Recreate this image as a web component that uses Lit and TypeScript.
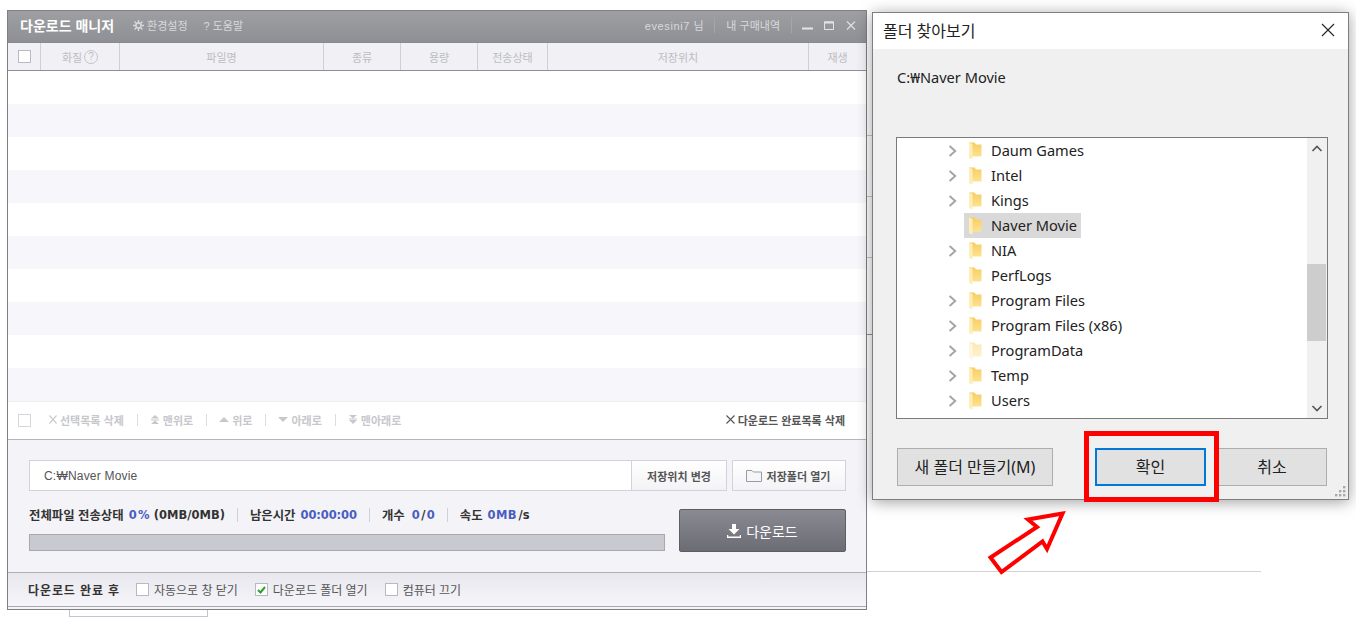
import { LitElement, html, css } from "lit";
import { customElement } from "lit/decorators.js";

const columns = [
  { label: "", w: 33 },
  { label: "화질", w: 79, help: true },
  { label: "파일명", w: 204 },
  { label: "종류", w: 77 },
  { label: "용량", w: 77 },
  { label: "전송상태", w: 70 },
  { label: "저장위치", w: 261 },
  { label: "재생", w: 57 },
];

const folders = [
  { name: "Daum Games", arrow: true },
  { name: "Intel", arrow: true },
  { name: "Kings", arrow: true },
  { name: "Naver Movie", arrow: false, selected: true },
  { name: "NIA", arrow: true },
  { name: "PerfLogs", arrow: false },
  { name: "Program Files", arrow: true },
  { name: "Program Files (x86)", arrow: true },
  { name: "ProgramData", arrow: true, pale: true },
  { name: "Temp", arrow: true },
  { name: "Users", arrow: true },
];

const folderIcon = (pale = false) => html`<svg class="folder ${pale ? "pale" : ""}" width="13" height="18" viewBox="0 0 13 18">
  <defs><linearGradient id="fg" x1="0" y1="0" x2="0" y2="1"><stop offset="0" stop-color="#f7cd5f"/><stop offset="1" stop-color="#fde291"/></linearGradient></defs>
  <path d="M0 .5H5.5L7 2.5H12.5V14.5H0Z" fill="url(#fg)"/>
  <path d="M0 .5L3.5 2V17.5L0 16Z" fill="#fdeeb8"/>
</svg>`;

const chevron = html`<svg class="chev" width="10" height="12" viewBox="0 0 10 12"><path d="M1.6 1L7.2 6L1.6 11" fill="none" stroke="#a6a6a6" stroke-width="2"/></svg>`;

const cross = (color: string, size: number) => html`<svg width=${size} height="9" viewBox="0 0 9 9" preserveAspectRatio="none"><path d="M.5 .5L8.5 8.5M8.5 .5L.5 8.5" stroke=${color} stroke-width="1.1"/></svg>`;
const toolIcon = (d: string) => html`<svg width="10" height="9" viewBox="0 0 10 9"><path d=${d} fill="#c7c7cc"/></svg>`;
const ICON_TOP = "M5 0L9 3.5H1ZM1 4.5H9V5.5H1ZM5 5.5L9 9H1Z";
const ICON_UP = "M5 2L10 7H0Z";
const ICON_DOWN = "M0 2H10L5 7Z";
const ICON_BOTTOM = "M1 0H9L5 3.5ZM1 3.5H9V4.5H1ZM1 5H9L5 9Z";

const scrapLines = [
  { y: 135, c: "#c6c6c6" },
  { y: 196, c: "#c6c6c6" },
  { y: 257, c: "#c6c6c6" },
  { y: 334, c: "#8f8f8f" },
];

@customElement("app-root")
export class AppRoot extends LitElement {
  static styles = css`
    :host { display: block; position: relative; width: 1356px; height: 617px; overflow: hidden; background: #fff; font-family: "Liberation Sans", "Noto Sans CJK KR", sans-serif; }
    .rule { position: absolute; left: 867px; top: 571px; width: 394px; height: 1px; background: #d2d2d2; }
    .scrap { position: absolute; left: 867px; width: 6px; height: 1px; }
    .stub { position: absolute; left: 69px; top: 610px; width: 139px; height: 7px; border: 1px solid #c4c4c8; border-top: 0; box-sizing: border-box; }

    .win { position: absolute; left: 7px; top: 10px; width: 860px; height: 600px; box-sizing: border-box; border: 1px solid #7f7f84; display: flex; flex-direction: column; background: #f3f3f8; }
    .title { height: 31px; flex: none; box-sizing: border-box; background: linear-gradient(#9e9fa3, #8f9095); display: flex; align-items: center; padding: 0 10px 3px 12px; color: #d9d9dc; font-size: 11px; }
    .title b { color: #fff; font-size: 14px; font-weight: 700; margin-right: 19px; }
    .title .menu { margin-right: 16px; display: flex; align-items: center; gap: 3px; }
    .title .spacer { flex: 1; }
    .title .user { letter-spacing: .6px; margin-right: -1px; }
    .title i { width: 1px; height: 16px; background: #a5a6aa; margin: 0 11px; }
    .title i.last { margin-right: 10px; }
    .title .ctl { margin-left: 11px; display: block; }
    .title .ctl.first { margin-left: 0; }
    .title .ctl.mid { margin-right: 1px; }

    .head { display: flex; height: 29px; flex: none; box-sizing: border-box; background: #f0f0f5; border-bottom: 1px solid #8f8fa0; border-top: 1px solid #8a8a90; color: #bcbcc2; font-size: 11px; }
    .head > div { display: flex; align-items: center; justify-content: center; box-sizing: border-box; border-right: 1px solid #cfcfd6; gap: 2px; }
    .head > div:last-child { border-right: 0; }
    .help { width: 14px; height: 14px; border-radius: 50%; border: 1px solid #c4c4ca; box-sizing: border-box; font-size: 10px; display: flex; align-items: center; justify-content: center; }

    .cb { width: 13px; height: 13px; box-sizing: border-box; border: 1px solid #b9b9c2; background: #fff; display: flex; align-items: center; justify-content: center; flex: none; }
    .cb.faint { border-color: #d5d5da; }

    .rows { flex: none; height: 330px; display: flex; flex-direction: column; }
    .rows div { height: 33px; flex: none; background: #fff; }
    .rows div:nth-child(even) { background: #f7f7fb; }

    .tools { height: 39px; flex: none; box-sizing: border-box; background: #fff; border-top: 1px solid #eeeef3; border-bottom: 1px solid #b4b4bd; display: flex; align-items: center; padding: 0 21px 2px 10px; font-size: 11px; color: #c7c7cc; font-weight: 700; }
    .tools .cb { margin: 2px 18px 0 0; }
    .tools span { display: flex; align-items: center; gap: 3px; white-space: nowrap; }
    .tools i { width: 1px; height: 12px; background: #dcdce0; margin: 0 12px 0 13px; }
    .tools .right { margin-left: auto; color: #555; }

    .panel { flex: none; height: 133px; box-sizing: border-box; padding: 20px 20px 0 21px; border-bottom: 1px solid #b0b0b6; }
    .pathrow { display: flex; height: 31px; font-size: 11px; }
    .path { flex: 1; box-sizing: border-box; background: #fff; border: 1px solid #d2d2d9; padding-left: 14px; display: flex; align-items: center; color: #555; font-size: 12px; letter-spacing: .2px; }
    .btn { box-sizing: border-box; border: 1px solid #d2d2d9; background: linear-gradient(#fff, #f3f3f6); display: flex; align-items: center; justify-content: center; gap: 5px; font-size: 11px; font-weight: 700; color: #555; }
    .btn.change { width: 96px; margin-left: -1px; }
    .btn.open { width: 114px; margin-left: 5px; padding-right: 2px; }
    .lower { display: flex; margin-top: 18px; gap: 14px; }
    .left { width: 636px; }
    .status { display: flex; align-items: center; height: 14px; margin-top: -1px; font-size: 12.4px; font-weight: 700; color: #333; white-space: nowrap; }
    .status em { font-style: normal; color: #4a5dc0; font-family: "DejaVu Sans", sans-serif; font-size: 11.5px; margin-left: 5px; letter-spacing: -.1px; }
    .status em.pct { letter-spacing: 1.3px; }
    .status em.cnt { margin-left: 7px; }
    .status em.cnt2 { margin-left: 0; }
    .status em.spd { letter-spacing: .4px; }
    .status .k { font-family: "DejaVu Sans", sans-serif; font-size: 11.5px; margin-left: 3px; }
    .status .s { font-family: "DejaVu Sans", sans-serif; font-size: 11.5px; margin: 0 1.5px; }
    .status i { width: 1px; height: 14px; background: #d0d0d6; margin: 0 12px; }
    .bar { margin-top: 12px; height: 17px; box-sizing: border-box; background: #c9c9d2; border: 1px solid #a8a8ae; }
    .dl { width: 167px; height: 43px; box-sizing: border-box; border: 1px solid #5d5d64; border-radius: 2px; background: linear-gradient(#8a8a93, #6c6c75); color: #fff; font-size: 14px; display: flex; align-items: center; justify-content: center; gap: 5px; }

    .foot { flex: none; height: 34px; box-sizing: border-box; background: linear-gradient(#e7e7ed, #f5f5fa); border-bottom: 1px solid #a8a8ae; display: flex; align-items: center; padding-left: 20px; font-size: 12px; color: #555; letter-spacing: -.02px; }
    .foot b { color: #333; margin-right: 16px; letter-spacing: .9px; white-space: nowrap; }
    .foot .cb { margin-right: 5px; }
    .foot span { margin-right: 17px; white-space: nowrap; }

    .dlg { position: absolute; left: 872px; top: 12px; width: 477px; height: 488px; box-sizing: border-box; border: 1px solid #7e7e7e; background: #f0f0f0; box-shadow: 0 2px 14px rgba(0,0,0,.38); display: flex; flex-direction: column; font-family: "Noto Sans", "Noto Sans CJK KR", sans-serif; color: #222; }
    .dtitle { height: 36px; flex: none; box-sizing: border-box; background: #fff; display: flex; align-items: center; justify-content: space-between; padding: 0 13px 2px 10px; font-size: 16px; }
    .dpath { height: 88px; flex: none; box-sizing: border-box; padding: 18px 0 0 24px; font-size: 14.6px; }
    .tree { margin-left: 23px; width: 432px; height: 282px; flex: none; box-sizing: border-box; border: 1px solid #7a7a7a; background: #fff; display: flex; position: relative; overflow: hidden; }
    .list { flex: 1; padding: 0 0 0 51px; font-size: 14.6px; }
    .node { display: flex; align-items: center; height: 25px; }
    .node .chev { margin-right: 6px; flex: none; }
    .node .gap { width: 16px; flex: none; }
    .label { display: flex; align-items: center; height: 25px; padding: 0 4px 0 5px; }
    .nm { margin-bottom: 2px; }
    .selected { background: #d9d9d9; }
    .folder { margin-right: 9px; flex: none; }
    .pale { opacity: .45; }
    .scroll { width: 20px; flex: none; background: #f0f0f0; position: relative; }
    .thumb { position: absolute; left: 0; right: 1px; top: 126px; height: 77px; background: #cdcdcd; }
    .arrowb { position: absolute; left: 4px; }
    .arrowb.up { top: 6px; }
    .arrowb.down { bottom: 5px; }
    .dbtns { display: flex; margin: 29px 0 0 24px; height: 38px; font-size: 16px; }
    .dbtn { box-sizing: border-box; border: 1px solid #adadad; background: #e1e1e1; display: flex; align-items: center; justify-content: center; padding-bottom: 3px; }
    .dbtn.mk { width: 156px; }
    .dbtn.ok { width: 111px; margin-left: 42px; border: 2px solid #0078d7; }
    .dbtn.no { width: 110px; margin-left: 11px; }
    .grip { position: absolute; right: 2px; bottom: 2px; }

    .redbox { position: absolute; left: 1084px; top: 431px; width: 135px; height: 71px; box-sizing: border-box; border: 5px solid #f00; }
    .arrow { position: absolute; left: 980px; top: 505px; }
  `;

  render() {
    return html`
      <div class="rule"></div>
      ${scrapLines.map((l) => html`<div class="scrap" style="top:${l.y}px;background:${l.c}"></div>`)}
      <div class="stub"></div>
      <section class="win">
        <div class="title">
          <b>다운로드 매니저</b>
          <span class="menu">
            <svg width="11" height="11" viewBox="0 0 11 11"><circle cx="5.5" cy="5.5" r="2.6" fill="none" stroke="#d9d9dc" stroke-width="1.6"/><path d="M5.5 0V2M5.5 9V11M0 5.5H2M9 5.5H11M1.6 1.6L3 3M8 8L9.4 9.4M1.6 9.4L3 8M8 3L9.4 1.6" stroke="#d9d9dc" stroke-width="1.4"/></svg>
            환경설정
          </span>
          <span class="menu">? 도움말</span>
          <span class="spacer"></span>
          <span class="user">evesini7 님</span>
          <i></i>
          <span>내 구매내역</span>
          <i class="last"></i>
          <svg class="ctl first" width="11" height="11" viewBox="0 0 11 11"><path d="M0 8.5H11" stroke="#e4e4e6" stroke-width="2"/></svg>
          <svg class="ctl mid" width="10" height="11" viewBox="0 0 10 11"><path d="M.5 2H9.5V9.5H.5Z" fill="none" stroke="#e4e4e6"/><path d="M0 2.5H10" stroke="#e4e4e6" stroke-width="2"/></svg>
          <svg class="ctl" width="10" height="11" viewBox="0 0 10 11"><path d="M1 1.5L9 9.5M9 1.5L1 9.5" stroke="#dfdfe2" stroke-width="1.3"/></svg>
        </div>
        <div class="head">
          ${columns.map(
            (c, i) => html`<div style="width:${c.w}px">
              ${i === 0 ? html`<span class="cb"></span>` : c.label}
              ${c.help ? html`<span class="help">?</span>` : ""}
            </div>`
          )}
        </div>
        <div class="rows">${Array.from({ length: 10 }, () => html`<div></div>`)}</div>
        <div class="tools">
          <span class="cb faint"></span>
          <span>${cross("#c7c7cc", 8)}선택목록 삭제</span><i></i>
          <span>${toolIcon(ICON_TOP)}맨위로</span><i></i>
          <span>${toolIcon(ICON_UP)}위로</span><i></i>
          <span>${toolIcon(ICON_DOWN)}아래로</span><i></i>
          <span>${toolIcon(ICON_BOTTOM)}맨아래로</span>
          <span class="right">${cross("#555", 9)}다운로드 완료목록 삭제</span>
        </div>
        <div class="panel">
          <div class="pathrow">
            <div class="path">C:₩Naver Movie</div>
            <div class="btn change">저장위치 변경</div>
            <div class="btn open">
              <svg width="16" height="13" viewBox="0 0 16 13"><path d="M.5 12.5V1.5H6L7.5 3H15.5V12.5Z" fill="#f6f6f8" stroke="#9a9aa2"/></svg>
              저장폴더 열기
            </div>
          </div>
          <div class="lower">
            <div class="left">
              <div class="status">
                전체파일 전송상태<em class="pct">0%</em><span class="k">(0MB/0MB)</span><i></i>
                남은시간<em>00:00:00</em><i></i>
                개수<em class="cnt">0</em><span class="s">/</span><em class="cnt2">0</em><i></i>
                속도<em class="spd">0MB</em><span class="s">/s</span>
              </div>
              <div class="bar"></div>
            </div>
            <div class="dl">
              <svg width="14" height="14" viewBox="0 0 14 14"><path d="M5 0H9V5H12.5L7 10.5L1.5 5H5Z" fill="#fff"/><path d="M.5 11V13.2H13.5V11" fill="none" stroke="#fff" stroke-width="1.5"/></svg>
              다운로드
            </div>
          </div>
        </div>
        <div class="foot">
          <b>다운로드 완료 후</b>
          <span class="cb"></span><span>자동으로 창 닫기</span>
          <span class="cb"><svg width="9" height="8" viewBox="0 0 9 8"><path d="M1 4L3.5 6.5L8 1" fill="none" stroke="#2f9e2f" stroke-width="2"/></svg></span><span>다운로드 폴더 열기</span>
          <span class="cb"></span><span>컴퓨터 끄기</span>
        </div>
      </section>

      <section class="dlg">
        <div class="dtitle">
          <span>폴더 찾아보기</span>
          <svg width="14" height="14" viewBox="0 0 14 14"><path d="M1 1L13 13M13 1L1 13" stroke="#222" stroke-width="1.1"/></svg>
        </div>
        <div class="dpath">C:₩Naver Movie</div>
        <div class="tree">
          <div class="list">
            ${folders.map(
              (f) => html`<div class="node">
                ${f.arrow ? chevron : html`<span class="gap"></span>`}
                <span class="label ${f.selected ? "selected" : ""}">${folderIcon(f.pale)}<span class="nm">${f.name}</span></span>
              </div>`
            )}
          </div>
          <div class="scroll">
            <svg class="arrowb up" width="12" height="9" viewBox="0 0 12 9"><path d="M1.5 7L6 2.5L10.5 7" fill="none" stroke="#555" stroke-width="1.6"/></svg>
            <div class="thumb"></div>
            <svg class="arrowb down" width="12" height="9" viewBox="0 0 12 9"><path d="M1.5 2L6 6.5L10.5 2" fill="none" stroke="#555" stroke-width="1.6"/></svg>
          </div>
        </div>
        <div class="dbtns">
          <div class="dbtn mk">새 폴더 만들기(M)</div>
          <div class="dbtn ok">확인</div>
          <div class="dbtn no">취소</div>
        </div>
        <svg class="grip" width="11" height="11" viewBox="0 0 11 11" fill="#a8a8a8"><rect x="8" y="0" width="2.4" height="2.4"/><rect x="4" y="4" width="2.4" height="2.4"/><rect x="8" y="4" width="2.4" height="2.4"/><rect x="0" y="8" width="2.4" height="2.4"/><rect x="4" y="8" width="2.4" height="2.4"/><rect x="8" y="8" width="2.4" height="2.4"/></svg>
      </section>

      <div class="redbox"></div>
      <svg class="arrow" width="95" height="75" viewBox="980 505 95 75">
        <polygon points="1062.5,513.5 1028,519.5 1037,527 990.5,557.5 1001.5,572 1042.5,541.5 1047,549" fill="#fff" stroke="#f00" stroke-width="4"/>
      </svg>
    `;
  }
}
